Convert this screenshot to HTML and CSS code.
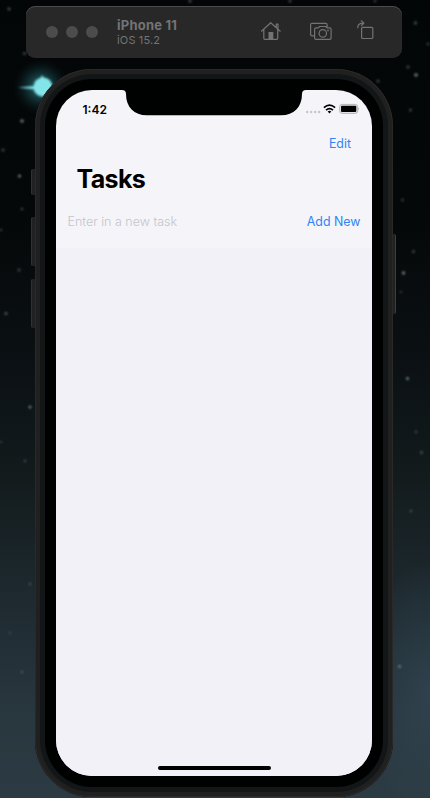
FILE: index.html
```html
<!DOCTYPE html>
<html lang="en">
<head>
<meta charset="utf-8">
<title>Tasks</title>
<link rel="stylesheet" href="styles.css">
</head>
<body>
<svg class="sky" viewBox="0 0 430 798" aria-hidden="true">
  <defs>
    <radialGradient id="halo"><stop offset="0" stop-color="#4fb4bd" stop-opacity=".9"/><stop offset=".4" stop-color="#23666d" stop-opacity=".55"/><stop offset="1" stop-color="#0a2024" stop-opacity="0"/></radialGradient>
    <filter id="soft" x="-50%" y="-50%" width="200%" height="200%"><feGaussianBlur stdDeviation=".8"/></filter>
  </defs>
  <circle cx="41" cy="87" r="28" fill="url(#halo)"/>
  <g filter="url(#soft)" fill="#83e5e9"><circle cx="43" cy="87" r="9.500"/><path d="M18 87.500L36 86V89.500ZM40 80L42 75L45 80Z"/></g>
  <g fill="#75858a" filter="url(#soft)">
    <g opacity=".9"><circle cx="22" cy="121" r="1.700"/><circle cx="19.500" cy="176" r="1.600"/><circle cx="416" cy="75" r="1.800"/><circle cx="403.500" cy="273" r="1.700"/><circle cx="407.500" cy="378.500" r="1.600"/><circle cx="399.500" cy="666.500" r="1.400"/><circle cx="30" cy="407" r="1.500"/></g>
    <g opacity=".5"><circle cx="9" cy="9" r="1.700"/><circle cx="24.500" cy="53.500" r="1.600"/><circle cx="190" cy="1" r="1.700"/><circle cx="290" cy="1" r="1.600"/><circle cx="375" cy="1" r="1.300"/><circle cx="415.500" cy="23" r="1.700"/><circle cx="408" cy="67" r="1.600"/><circle cx="378" cy="81" r="1.600"/><circle cx="410.500" cy="110" r="1.500"/><circle cx="428" cy="44" r="1.300"/><circle cx="3" cy="150" r="1.500"/><circle cx="22" cy="209" r="1.300"/><circle cx="1" cy="230" r="1.200"/><circle cx="19" cy="270" r="1.500"/><circle cx="6" cy="313.500" r="1.700"/><circle cx="413.500" cy="251.500" r="1.500"/><circle cx="402.500" cy="200" r="1.300"/><circle cx="401" cy="292" r="1.100"/><circle cx="421.500" cy="452.500" r="1.500"/><circle cx="416" cy="432" r="1.300"/><circle cx="25" cy="461" r="1.200"/><circle cx="1" cy="442" r="1.100"/><circle cx="411" cy="511" r="1.300"/><circle cx="30" cy="584" r="1.200"/><circle cx="22" cy="672" r="1.300"/><circle cx="10" cy="633" r="1"/></g>
  </g>
</svg>

<header class="toolbar">
  <div class="lights"><i></i><i></i><i></i></div>
  <div class="device"><strong>iPhone 11</strong><span>iOS 15.2</span></div>
  <div class="actions">
    <svg width="22" height="22" viewBox="260 20 22 22"><path d="M261.500 31.200L270.700 22.700L280.200 31.200M263.800 29.500V38.300Q263.800 39.300 264.800 39.300H276.700Q277.700 39.300 277.700 38.300V29.500M276.300 27V24H278V28.800"/><path class="solid" d="M268.500 32H273.300V39H268.500Z"/></svg>
    <svg width="24" height="22" viewBox="309 20 24 22"><path d="M314 35.800H312Q310.600 35.800 310.600 34.400V24.700Q310.600 23.300 312 23.300H325.700Q327.100 23.300 327.100 24.700V26.500M316 27.800H318.300L319.500 26.500H325.700L327 27.800H329.700Q331.100 27.800 331.100 29.200V38Q331.100 39.400 329.700 39.400H316Q314.600 39.400 314.600 38V29.200Q314.600 27.800 316 27.800Z"/><circle cx="322.800" cy="33.400" r="3.700"/><circle class="solid" cx="328" cy="30.400" r=".9"/></svg>
    <svg width="20" height="22" viewBox="355 20 20 22"><rect x="361.600" y="27.300" width="11.200" height="11.200" rx="1"/><path d="M357.800 27.800Q357.600 23.200 363.500 23.100M361.300 20.800L363.900 23.100L361.500 25.500"/></svg>
  </div>
</header>

<div class="phone">
  <span class="key mute"></span><span class="key up"></span><span class="key down"></span><span class="key power"></span>
  <main class="screen">
    <svg class="notch" width="184" height="26" viewBox="0 0 184 26"><path d="M0 0Q4 0 4 4C4 17 12 25.300 25 25.300H159C172 25.300 180 17 180 4Q180 0 184 0Z"/></svg>
    <div class="status">
      <time>1:42</time>
      <svg width="56" height="14" viewBox="305 102 56 14">
        <g fill="#c6c6ca"><circle cx="307.200" cy="112" r="1.250"/><circle cx="311.200" cy="112" r="1.250"/><circle cx="315.200" cy="112" r="1.250"/><circle cx="319.100" cy="112" r="1.250"/></g>
        <g fill="none" stroke="#000" stroke-width="1.700"><path d="M323.900 107.700Q329.500 102.500 335.100 107.700"/><path d="M326 110.200Q329.500 107 333 110.200"/></g>
        <path d="M327.700 111.400Q329.500 110 331.300 111.400L329.500 113.400Z"/>
        <rect x="339.700" y="104.400" width="18" height="9" rx="2.400" fill="#e7e7ea" stroke="#b5b5b8"/><rect x="341" y="105.800" width="15.300" height="6.300" rx="1"/><path d="M358.500 107.300Q360 108.900 358.500 110.500Z" fill="#999"/>
      </svg>
    </div>
    <nav class="nav"><a>Edit</a></nav>
    <h1>Tasks</h1>
    <div class="entry"><span>Enter in a new task</span><a>Add New</a></div>
    <section class="list"></section>
    <div class="home"></div>
  </main>
</div>
</body>
</html>
```

FILE: styles.css
```css
* { box-sizing: border-box; }
body {
  margin: 0;
  height: 798px;
  padding-top: 6px;
  overflow: hidden;
  position: relative;
  font-family: Inter, "Liberation Sans", sans-serif;
  background: radial-gradient(ellipse 70px 130px at 430px 690px, rgba(55,78,93,.5), transparent), linear-gradient(#030606 0, #050809 220px, #0b1114 370px, #131b1d 480px, #1e2a30 600px, #29373f 720px, #2c3b43 798px);
}
.sky { position: absolute; inset: 0; width: 430px; height: 798px; }
.toolbar {
  position: relative;
  display: flex;
  align-items: center;
  width: 376px;
  height: 52px;
  margin-left: 26px;
  padding: 0 27px 0 20px;
  border-radius: 9px;
  background: #282828;
  box-shadow: inset 0 1px #4b4b4b;
}
.lights { display: flex; gap: 8px; }
.lights i { width: 12px; height: 12px; border-radius: 50%; background: #4c4c4c; }
.device { display: flex; flex-direction: column; margin-left: 19px; padding-top: 1px; color: #747474; }
.device strong { font-size: 13px; line-height: 15px; font-weight: 700; letter-spacing: .22px; }
.device span { font-size: 11px; line-height: 14px; letter-spacing: .15px; }
.actions { display: flex; margin-left: auto; gap: 24px; padding-bottom: 2px; }
.actions svg { fill: none; stroke: #737373; stroke-width: 1.2; stroke-linejoin: round; stroke-linecap: round; }
.actions svg:first-child { margin-right: 3px; }
.actions svg:last-child { margin-left: -2px; }
.actions .solid { fill: #737373; stroke: none; }
.phone {
  position: relative;
  width: 358px;
  height: 728px;
  margin: 11px 0 0 35px;
  padding: 21px 21px 21px 20.500px;
  border-radius: 57px;
  background: #000201;
  box-shadow: inset 0 0 0 1px #2b2928, inset 0 0 0 5px #202020, inset 0 0 0 10px #121616;
}
.key { position: absolute; left: -4px; width: 4px; background: #202121; border-left: 1px solid #303131; border-radius: 2px 0 0 2px; }
.mute { top: 100px; height: 26px; }
.up { top: 148px; height: 49px; }
.down { top: 210px; height: 49px; }
.power { left: auto; right: -3px; top: 165px; height: 80px; width: 3px; border-left: 0; border-right: 1px solid #3c3d3d; border-radius: 0 2px 2px 0; }
.screen {
  position: relative;
  display: flex;
  flex-direction: column;
  height: 686px;
  overflow: hidden;
  border-radius: 36px;
  background: #f5f4f9;
  color: #000;
}
.notch { position: absolute; left: 66px; top: 0; fill: #000201; }
.status { display: flex; justify-content: space-between; align-items: center; height: 38px; padding: 0 11px 0 27px; }
.status time { font-size: 12px; font-weight: 600; }
.nav { display: flex; justify-content: flex-end; height: 31px; padding-right: 21px; align-items: center; }
a { color: #2f84f5; font-size: 12.4px; }
h1 { margin: 0; padding: 0 0 0 21px; font-size: 25px; line-height: 40px; font-weight: 700; letter-spacing: -.65px; }
.entry { display: flex; justify-content: space-between; align-items: center; height: 49px; padding: 0 11.500px 4px 12px; }
.entry span { color: #c5c5cb; font-size: 12.5px; font-weight: 300; }
.list { flex: 1; background: #f2f1f7; }
.home { position: absolute; left: 102px; bottom: 6px; width: 113px; height: 4px; border-radius: 2px; background: #000; }
```
